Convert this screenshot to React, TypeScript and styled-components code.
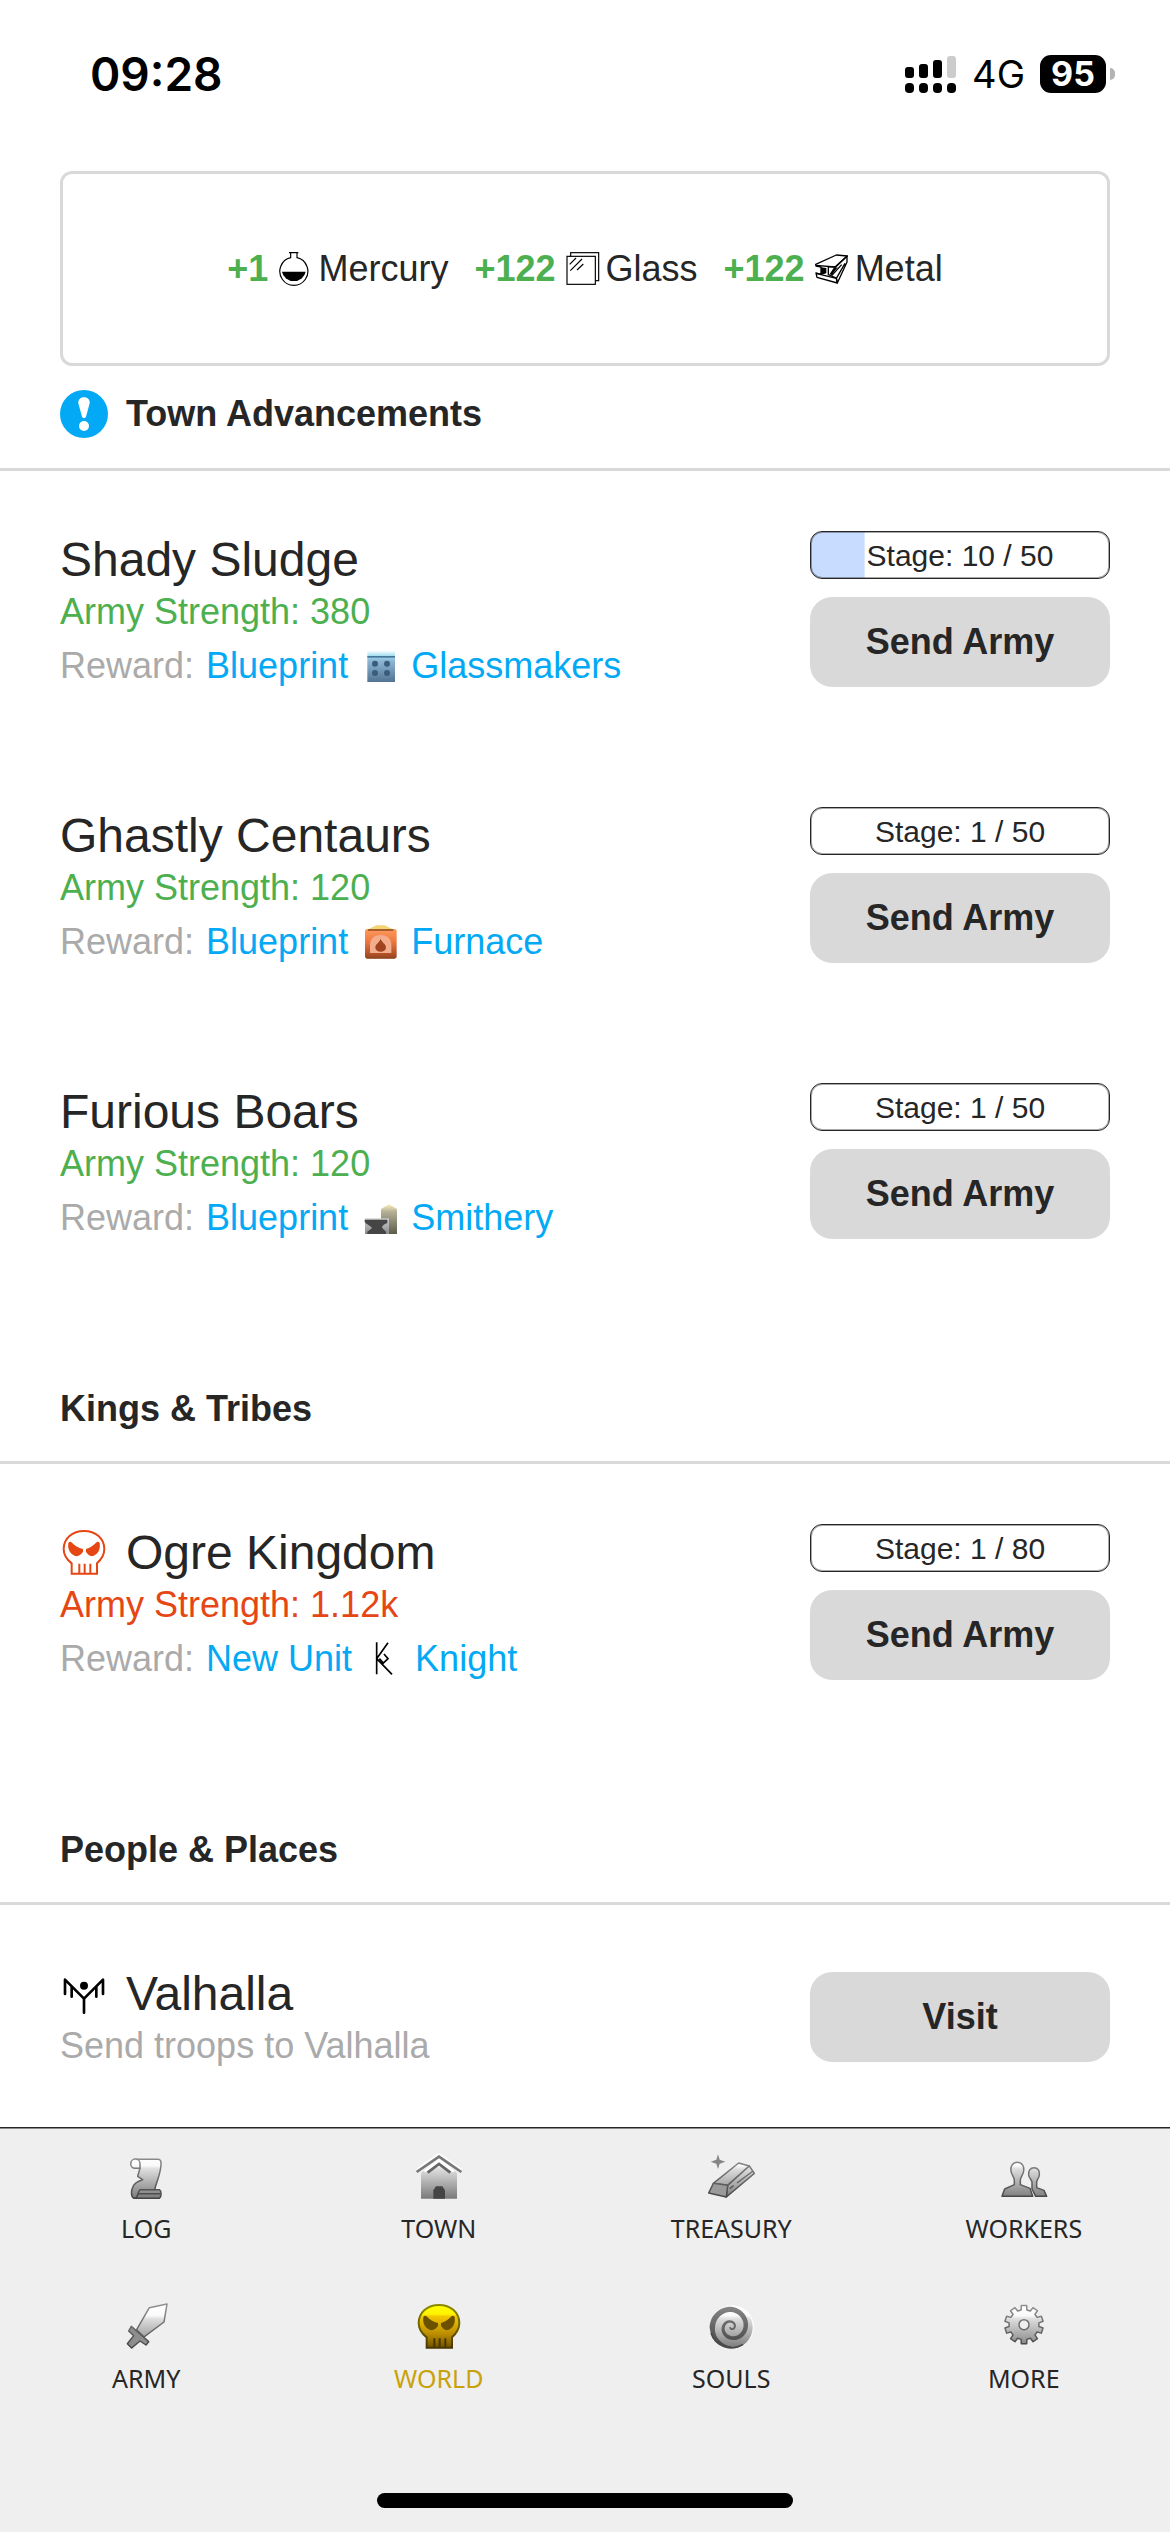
import React from "react";
import styled, { createGlobalStyle } from "styled-components";

const INK = "#262626";
const LINE = "#d9d9d9";
const GREEN = "#4caf50";
const BLUE = "#03a9f4";
const RED = "#e64614";
const MUTED = "#aaaaaa";
const GOLD = "#c8a20a";

const GlobalStyle = createGlobalStyle`
  * { box-sizing: border-box; }
  body {
    margin: 0;
    background: #ffffff;
    color: ${INK};
    font-family: "Liberation Sans", Arial, sans-serif;
    font-size: 36px;
  }
`;

const Page = styled.div`
  display: flex;
  flex-direction: column;
  min-height: 100vh;
`;

/* ---------- status bar ---------- */

const StatusBar = styled.header`
  display: flex;
  align-items: center;
  justify-content: space-between;
  height: 147px;
  padding: 0 55px 0 90px;
  color: #000000;
  font-family: Inter, sans-serif;
`;

const Clock = styled.time`
  font-size: 46px;
  font-weight: 600;
  line-height: 56px;
`;

const StatusIcons = styled.div`
  display: flex;
  align-items: center;
`;

const Network = styled.span`
  margin: 0 15px 0 16px;
  font-size: 38px;
  font-weight: 400;
`;

const Battery = styled.span`
  display: grid;
  place-items: center;
  width: 66px;
  height: 38px;
  border-radius: 11px;
  background: #000000;
  color: #ffffff;
  font-size: 34px;
  font-weight: 700;
  line-height: 38px;
`;

const BatteryTip = styled.span`
  width: 5px;
  height: 12px;
  margin-left: 4px;
  border-radius: 0 5px 5px 0;
  background: #b3b3b3;
`;

/* ---------- content ---------- */

const Content = styled.main`
  flex: 1;
  padding-top: 24px;
`;

const Gains = styled.div`
  display: flex;
  flex-wrap: wrap;
  align-items: center;
  justify-content: center;
  gap: 12px 26px;
  min-height: 195px;
  margin: 0 60px;
  padding: 24px;
  border: 3px solid ${LINE};
  border-radius: 12px;
`;

const Gain = styled.span`
  display: flex;
  align-items: center;
  line-height: 45px;

  svg { margin: 0 7px 0 10px; }
`;

const Amount = styled.strong`
  color: ${GREEN};
`;

const Section = styled.section`
  & + & { margin-top: 64px; }
`;

const SectionTitle = styled.h2`
  display: flex;
  align-items: center;
  gap: 18px;
  margin: 0;
  padding: 24px 60px 30px;
  border-bottom: 3px solid ${LINE};
  font-size: 36px;
  font-weight: 700;
  line-height: 44px;
`;

const Row = styled.article`
  display: flex;
  align-items: center;
  justify-content: space-between;
  gap: 24px;
  padding: 60px 60px 59px;
`;

const Name = styled.h3`
  display: flex;
  align-items: center;
  gap: 18px;
  margin: 0;
  font-size: 48px;
  font-weight: 400;
  line-height: 58px;
`;

const Line = styled.p<{ $color: string }>`
  margin: 0;
  color: ${(p) => p.$color};
  line-height: 45px;
`;

const Reward = styled.p`
  display: flex;
  align-items: center;
  margin: 9px 0 0;
  color: ${MUTED};
  line-height: 45px;

  svg { margin: 0 14px 0 16px; }
`;

const RewardLink = styled.a`
  color: ${BLUE};
  text-decoration: none;
`;

const RewardKind = styled.span`
  margin-left: 12px;
  color: ${BLUE};
`;

const Actions = styled.div<{ $top?: boolean }>`
  display: flex;
  flex-direction: column;
  align-self: ${(p) => (p.$top ? "flex-start" : "center")};
  flex: none;
  gap: 18px;
  width: 300px;
`;

const Stage = styled.div<{ $done: number }>`
  height: 48px;
  border: 1px solid ${INK};
  border-radius: 12px;
  background: linear-gradient(#c8dcff, #c8dcff) 0 0 / ${(p) => p.$done}% 100% no-repeat;
  box-shadow: inset 0 0 0 1px rgba(38, 38, 38, 0.4);
  font-size: 30px;
  line-height: 48px;
  text-align: center;
`;

const Button = styled.button`
  width: 100%;
  height: 90px;
  padding: 0;
  border: 0;
  border-radius: 22px;
  background: ${LINE};
  color: ${INK};
  font: inherit;
  font-weight: 700;
`;

/* ---------- navigation ---------- */

const Nav = styled.nav`
  position: sticky;
  bottom: 0;
  border-top: 1px solid ${INK};
  background: #efefef;
  box-shadow: inset 0 1px 0 #8a8a8a;
`;

const Tabs = styled.div`
  display: grid;
  grid-template-columns: repeat(4, 1fr);
  row-gap: 58px;
  padding-top: 25px;
`;

const Tab = styled.a<{ $active?: boolean }>`
  display: flex;
  flex-direction: column;
  align-items: center;
  gap: 11px;
  color: ${(p) => (p.$active ? GOLD : INK)};
  font-family: "Noto Sans", sans-serif;
  font-size: 25px;
  line-height: 33px;
  text-decoration: none;
`;

const HomeIndicator = styled.div`
  width: 416px;
  height: 15px;
  margin: 98px auto 24px;
  border-radius: 8px;
  background: #000000;
`;

/* ---------- drawings ---------- */

const Signal = () => (
  <svg width="51" height="38" viewBox="0 0 51 38" aria-hidden="true">
    <rect x="0" y="12" width="9" height="11" rx="3" />
    <rect x="14" y="9" width="9" height="14" rx="3" />
    <rect x="28" y="5" width="9" height="18" rx="3" />
    <rect x="42" y="1" width="9" height="22" rx="3" fill="#cccccc" />
    {[0, 14, 28, 42].map((x) => (
      <rect key={x} x={x} y="28" width="9" height="10" rx="4" />
    ))}
  </svg>
);

const Small = ({ children }: { children: React.ReactNode }) => (
  <svg width="33" height="33" viewBox="0 0 99 99" overflow="visible" aria-hidden="true">
    {children}
  </svg>
);

const Large = ({ children }: { children: React.ReactNode }) => (
  <svg width="48" height="48" viewBox="0 0 144 144" aria-hidden="true">
    {children}
  </svg>
);

const Mercury = () => (
  <Small>
    <path d="M33 2H61M38 2V17A42 42 0 1 0 57 17V2" fill="#fff" stroke="#000" strokeWidth="3.5" />
    <path d="M12 59H83A36 34 0 0 1 12 59Z" />
  </Small>
);

const Glass = () => (
  <Small>
    <rect x="14" y="2" width="84" height="84" fill="#fff" stroke="#000" strokeWidth="3.5" />
    <rect x="3" y="13" width="85" height="84" fill="#fff" stroke="#000" strokeWidth="3.5" />
    <path d="M11 37L30 18M13 56L48 21M33 54L52 36" stroke="#000" strokeWidth="3.5" />
  </Small>
);

const Metal = () => (
  <Small>
    <path d="M2 37L64 9L97 12L62 45L40 44V68L64 78L67 93L6 76L3 63L18 67V45L3 42Z" fill="#fff" stroke="#000" strokeWidth="4" strokeLinejoin="round" />
    <path d="M18 46L34 48V64L18 68ZM56 48L68 46L50 70L44 66Z" />
    <path d="M3 40L60 45L96 12V30L67 93L64 79L90 34M6 65L64 79M50 71L80 38" fill="none" stroke="#000" strokeWidth="4" strokeLinejoin="round" />
  </Small>
);

const Glassmakers = () => (
  <Small>
    <defs>
      <linearGradient id="gm" x1="0" y1="0" x2="0" y2="1">
        <stop offset="0" stopColor="#f4fdff" />
        <stop offset=".15" stopColor="#a5dff0" />
        <stop offset=".3" stopColor="#8fb9d8" />
        <stop offset="1" stopColor="#527391" />
      </linearGradient>
    </defs>
    <rect x="10" y="6" width="83" height="93" fill="url(#gm)" />
    <rect x="10" y="21" width="83" height="5" fill="#44779a" />
    {[44, 72].map((y) => (
      <g key={y} fill="#3b5c7c">
        <circle cx="33" cy={y} r="9" />
        <circle cx="69" cy={y} r="9" />
      </g>
    ))}
  </Small>
);

const Furnace = () => (
  <Small>
    <defs>
      <linearGradient id="fu" x1="0" y1="0" x2="0" y2="1">
        <stop offset="0" stopColor="#ff9a5c" />
        <stop offset=".4" stopColor="#f07a42" />
        <stop offset="1" stopColor="#99421f" />
      </linearGradient>
    </defs>
    <path d="M6 16L38 1H62L92 16Z" fill="#f2d470" />
    <rect x="3" y="12" width="95" height="89" rx="7" fill="url(#fu)" />
    <path d="M12 15H88M6 98H94" stroke="#8c4a20" strokeWidth="4" />
    <path d="M18 84V60C18 42 30 30 50 30S82 42 82 60V84Z" fill="#f3ac8c" />
    <path d="M50 41C54 53 66 57 66 68A16 12 0 0 1 34 68C34 57 46 53 50 41Z" fill="#a0441f" />
  </Small>
);

const Smithery = () => (
  <Small>
    <defs>
      <linearGradient id="sm" x1="0" y1="0" x2="0" y2="1">
        <stop offset="0" stopColor="#fff0bc" />
        <stop offset=".25" stopColor="#b4b095" />
        <stop offset="1" stopColor="#5c5c4c" />
      </linearGradient>
      <linearGradient id="an" x1="0" y1="0" x2="0" y2="1">
        <stop offset="0" stopColor="#cfcfcf" />
        <stop offset="1" stopColor="#8a8a8a" />
      </linearGradient>
    </defs>
    <path d="M51 24L75 10L99 24V99H51Z" fill="url(#sm)" />
    <rect x="3" y="52" width="72" height="47" fill="url(#an)" />
    <path d="M2 56H70V66C60 70 54 74 54 80L66 92V99H10V92L24 82C22 74 8 72 2 62Z" fill="#454545" />
  </Small>
);

const Knight = () => (
  <Small>
    <path d="M26 1V97M60 2L26 50L72 97M48 36L60 50L46 63L34 50" fill="none" stroke="#000" strokeWidth="5" />
  </Small>
);

const SKULL =
  "M35 134V103C22 93 11 80 11 60C11 28 37 6 72 6S133 28 133 60C133 80 122 93 111 103V134Z";
const EYES =
  "M25 42C28 37 32 38 36 41C44 49 54 56 69 60V69C63 77 55 83 46 81C32 77 22 62 25 42ZM119 42C116 37 112 38 108 41C100 49 90 56 78 60V69C84 77 90 83 99 81C113 77 122 62 119 42Z";

const RedSkull = () => (
  <Large>
    <path d={SKULL} fill="#fff" stroke={RED} strokeWidth="6" />
    <path d={EYES} fill={RED} />
    <path d="M58 104V132M74 104V132M91 104V132" stroke={RED} strokeWidth="6" />
  </Large>
);

const Alert = () => (
  <Large>
    <circle cx="72" cy="72" r="72" fill={BLUE} />
    <path d="M72 22C84 22 90 30 89 40L78 80C76 85 68 85 66 80L55 40C54 30 60 22 72 22Z" fill="#fff" />
    <circle cx="72" cy="108" r="15" fill="#fff" />
  </Large>
);

const ValhallaMark = () => (
  <Large>
    <path d="M15 72V29L72 86L129 29V72M35 80V50M109 80V50M72 86V128" fill="none" stroke="#000" strokeWidth="8" strokeLinecap="round" strokeLinejoin="round" />
    <circle cx="72" cy="47" r="12" />
  </Large>
);

const Steel = ({ id }: { id: string }) => (
  <defs>
    <linearGradient id={id} gradientUnits="userSpaceOnUse" x1="0" y1="10" x2="0" y2="136">
      <stop offset="0" stopColor="#ffffff" />
      <stop offset=".22" stopColor="#fafafa" />
      <stop offset=".3" stopColor="#dedede" />
      <stop offset="1" stopColor="#7a7a7a" />
    </linearGradient>
    <linearGradient id={id + "e"} gradientUnits="userSpaceOnUse" x1="0" y1="10" x2="0" y2="136">
      <stop offset="0" stopColor="#8f8f8f" />
      <stop offset="1" stopColor="#444444" />
    </linearGradient>
  </defs>
);

const LogIcon = () => (
  <Large>
    <Steel id="log" />
    <g fill="url(#log)" stroke="url(#loge)" strokeWidth="4.5" strokeLinejoin="round">
      <path d="M41 19H108C116 19 118 26 117 36C115 66 104 84 98 110H112C119 114 119 132 112 136H36C26 132 27 112 32 104C35 92 42 86 62 80L47 70L54 46Z" />
      <path d="M54 46H38A14 14 0 1 1 54 34Z" />
      <path d="M98 110H56C46 110 50 136 38 136M50 122H114" fill="none" />
    </g>
  </Large>
);

const TownIcon = () => (
  <Large>
    <Steel id="town" />
    <path d="M18 60L72 16L126 60V137H18Z" fill="url(#town)" />
    <path d="M5 50L72 2L139 50" fill="none" stroke="#fcfcfc" strokeWidth="6" />
    <path d="M5 57L72 11L139 57" fill="none" stroke="#777" strokeWidth="8" />
    <path d="M28 56L72 22L116 56" fill="none" stroke="#fff" strokeWidth="7" />
    <path d="M38 59L72 33L106 59" fill="none" stroke="#666" strokeWidth="8" />
    <path d="M55 137V112L63 100H82L90 112V137Z" fill="#444" />
  </Large>
);

const TreasuryIcon = () => (
  <Large>
    <Steel id="tr" />
    <path d="M33 4L38 20L55 26L38 32L33 48L28 32L11 26L28 20Z" fill="#858585" />
    <g fill="url(#tr)" stroke="url(#tre)" strokeWidth="4.5" strokeLinejoin="round">
      <path d="M19 91L95 30L127 39L62 97Z" />
      <path d="M62 97L127 39L142 61L58 132Z" />
      <path d="M5 120L19 91L62 97L58 132Z" fill="#9a9a9a" />
      <path d="M68 107L80 98M90 90L138 54" fill="none" />
    </g>
  </Large>
);

const WorkersIcon = () => (
  <Large>
    <Steel id="wo" />
    <g fill="url(#wo)" stroke="url(#woe)" strokeWidth="4.5" strokeLinejoin="round">
      <path d="M102 44C114 44 120 54 118 66C117 76 110 80 110 88V104L132 112L140 130H107L96 108V88C96 80 87 76 86 66C84 54 91 44 102 44Z" />
      <path d="M52 28C66 28 73 40 71 54C70 66 61 72 61 82V95L90 106L98 130H6L14 108L43 95V82C43 72 34 66 33 54C31 40 38 28 52 28Z" />
    </g>
  </Large>
);

const ArmyIcon = () => (
  <Large>
    <Steel id="ar" />
    <g stroke="url(#are)" strokeWidth="4.5" strokeLinejoin="round">
      <path d="M135 3L82 14L44 80L66 102L126 57Z" fill="url(#ar)" />
      <path d="M28 70L80 116L72 126L54 114L29 135L16 122L35 98L20 84Z" fill="#8e8e8e" />
    </g>
  </Large>
);

const WorldIcon = () => (
  <Large>
    <defs>
      <linearGradient id="wg" x1="0" y1="0" x2="0" y2="1">
        <stop offset="0" stopColor="#ffff00" />
        <stop offset=".22" stopColor="#fff200" />
        <stop offset=".26" stopColor="#f5c800" />
        <stop offset=".7" stopColor="#b88a00" />
        <stop offset="1" stopColor="#6e5200" />
      </linearGradient>
      <linearGradient id="we" x1="0" y1="0" x2="0" y2="1">
        <stop offset="0" stopColor="#8c8c00" />
        <stop offset="1" stopColor="#4a3700" />
      </linearGradient>
    </defs>
    <path d={SKULL} fill="url(#wg)" stroke="url(#we)" strokeWidth="6" />
    <path d={EYES} fill="#6b5000" />
    <path d="M58 106V132M74 106V132M91 106V132" stroke="#4a3700" strokeWidth="6" />
  </Large>
);

/* A band that winds clockwise into the disc and narrows on its way.
   The radii are those of its middle line at each quarter turn. */
const spiral = (() => {
  const radii = [59, 57, 53, 43, 33, 24, 16, 10, 6, 3];
  const outer: string[] = [];
  const inner: string[] = [];
  const steps = 12;
  for (let i = 0; i <= (radii.length - 1) * steps; i++) {
    const q = Math.min(Math.floor(i / steps), radii.length - 2);
    const f = i / steps - q;
    const r = radii[q] + (radii[q + 1] - radii[q]) * f;
    const a = (i / steps) * (Math.PI / 2) + Math.PI / 2;
    const half = i < steps ? 1 + (i / steps) * 7 : r * 0.11 + 2;
    const at = (d: number) => `${(73 + d * Math.cos(a)).toFixed(1)} ${(72 + d * Math.sin(a)).toFixed(1)}`;
    outer.push(at(r + half));
    inner.unshift(at(r - half));
  }
  return "M" + outer.concat(inner).join("L") + "Z";
})();

const SoulsIcon = () => (
  <Large>
    <Steel id="so" />
    <defs>
      <linearGradient id="sb" x1="0" y1="0" x2="0" y2="1">
        <stop offset="0" stopColor="#868686" />
        <stop offset="1" stopColor="#444444" />
      </linearGradient>
    </defs>
    <circle cx="76" cy="71" r="65" fill="#fafafa" />
    <circle cx="73" cy="73" r="64" fill="url(#so)" />
    <path d={spiral} fill="url(#sb)" />
    <path d="M12 90A64 62 0 0 0 108 124" fill="none" stroke="#4a4a4a" strokeWidth="5" />
  </Large>
);

const gear = (() => {
  const points: string[] = [];
  for (let i = 0; i < 10; i++) {
    [[-11, 45], [-8, 58], [8, 58], [11, 45]].forEach(([d, r]) => {
      const a = ((i * 36 + d - 90) * Math.PI) / 180;
      points.push(`${(72 + r * Math.cos(a)).toFixed(1)} ${(65 + r * Math.sin(a)).toFixed(1)}`);
    });
  }
  return "M" + points.join("L") + "Z";
})();

const MoreIcon = () => (
  <Large>
    <Steel id="mo" />
    <g stroke="url(#moe)" strokeWidth="4.5" strokeLinejoin="round">
      <path d={gear} fill="url(#mo)" />
      <circle cx="72" cy="65" r="15" fill="#efefef" />
    </g>
  </Large>
);

/* ---------- data ---------- */

const gains = [
  { amount: "+1", icon: <Mercury />, name: "Mercury" },
  { amount: "+122", icon: <Glass />, name: "Glass" },
  { amount: "+122", icon: <Metal />, name: "Metal" },
];

type Foe = {
  name: string;
  mark?: React.ReactNode;
  strength: string;
  strong?: boolean;
  kind: string;
  icon: React.ReactNode;
  reward: string;
  stage: number;
  stages: number;
};

const advancements: Foe[] = [
  { name: "Shady Sludge", strength: "380", kind: "Blueprint", icon: <Glassmakers />, reward: "Glassmakers", stage: 10, stages: 50 },
  { name: "Ghastly Centaurs", strength: "120", kind: "Blueprint", icon: <Furnace />, reward: "Furnace", stage: 1, stages: 50 },
  { name: "Furious Boars", strength: "120", kind: "Blueprint", icon: <Smithery />, reward: "Smithery", stage: 1, stages: 50 },
];

const kingdoms: Foe[] = [
  { name: "Ogre Kingdom", mark: <RedSkull />, strength: "1.12k", strong: true, kind: "New Unit", icon: <Knight />, reward: "Knight", stage: 1, stages: 80 },
];

const tabs = [
  { label: "LOG", icon: <LogIcon /> },
  { label: "TOWN", icon: <TownIcon /> },
  { label: "TREASURY", icon: <TreasuryIcon /> },
  { label: "WORKERS", icon: <WorkersIcon /> },
  { label: "ARMY", icon: <ArmyIcon /> },
  { label: "WORLD", icon: <WorldIcon />, active: true },
  { label: "SOULS", icon: <SoulsIcon /> },
  { label: "MORE", icon: <MoreIcon /> },
];

const FoeRow = ({ foe }: { foe: Foe }) => (
  <Row>
    <div>
      <Name>
        {foe.mark}
        {foe.name}
      </Name>
      <Line $color={foe.strong ? RED : GREEN}>Army Strength: {foe.strength}</Line>
      <Reward>
        Reward:
        <RewardKind>{foe.kind}</RewardKind>
        {foe.icon}
        <RewardLink href="#reward">{foe.reward}</RewardLink>
      </Reward>
    </div>
    <Actions $top>
      <Stage $done={((foe.stage - 1) / foe.stages) * 100}>
        Stage: {foe.stage} / {foe.stages}
      </Stage>
      <Button type="button">Send Army</Button>
    </Actions>
  </Row>
);

export default function App() {
  return (
    <Page>
      <GlobalStyle />
      <StatusBar>
        <Clock>09:28</Clock>
        <StatusIcons>
          <Signal />
          <Network>4G</Network>
          <Battery>95</Battery>
          <BatteryTip />
        </StatusIcons>
      </StatusBar>

      <Content>
        <Gains>
          {gains.map((g) => (
            <Gain key={g.name}>
              <Amount>{g.amount}</Amount>
              {g.icon}
              {g.name}
            </Gain>
          ))}
        </Gains>

        <Section>
          <SectionTitle>
            <Alert />
            Town Advancements
          </SectionTitle>
          {advancements.map((foe) => (
            <FoeRow key={foe.name} foe={foe} />
          ))}
        </Section>

        <Section>
          <SectionTitle>Kings &amp; Tribes</SectionTitle>
          {kingdoms.map((foe) => (
            <FoeRow key={foe.name} foe={foe} />
          ))}
        </Section>

        <Section>
          <SectionTitle>People &amp; Places</SectionTitle>
          <Row>
            <div>
              <Name>
                <ValhallaMark />
                Valhalla
              </Name>
              <Line $color={MUTED}>Send troops to Valhalla</Line>
            </div>
            <Actions>
              <Button type="button">Visit</Button>
            </Actions>
          </Row>
        </Section>
      </Content>

      <Nav>
        <Tabs>
          {tabs.map((t) => (
            <Tab key={t.label} href={`#${t.label.toLowerCase()}`} $active={t.active}>
              {t.icon}
              {t.label}
            </Tab>
          ))}
        </Tabs>
        <HomeIndicator />
      </Nav>
    </Page>
  );
}
